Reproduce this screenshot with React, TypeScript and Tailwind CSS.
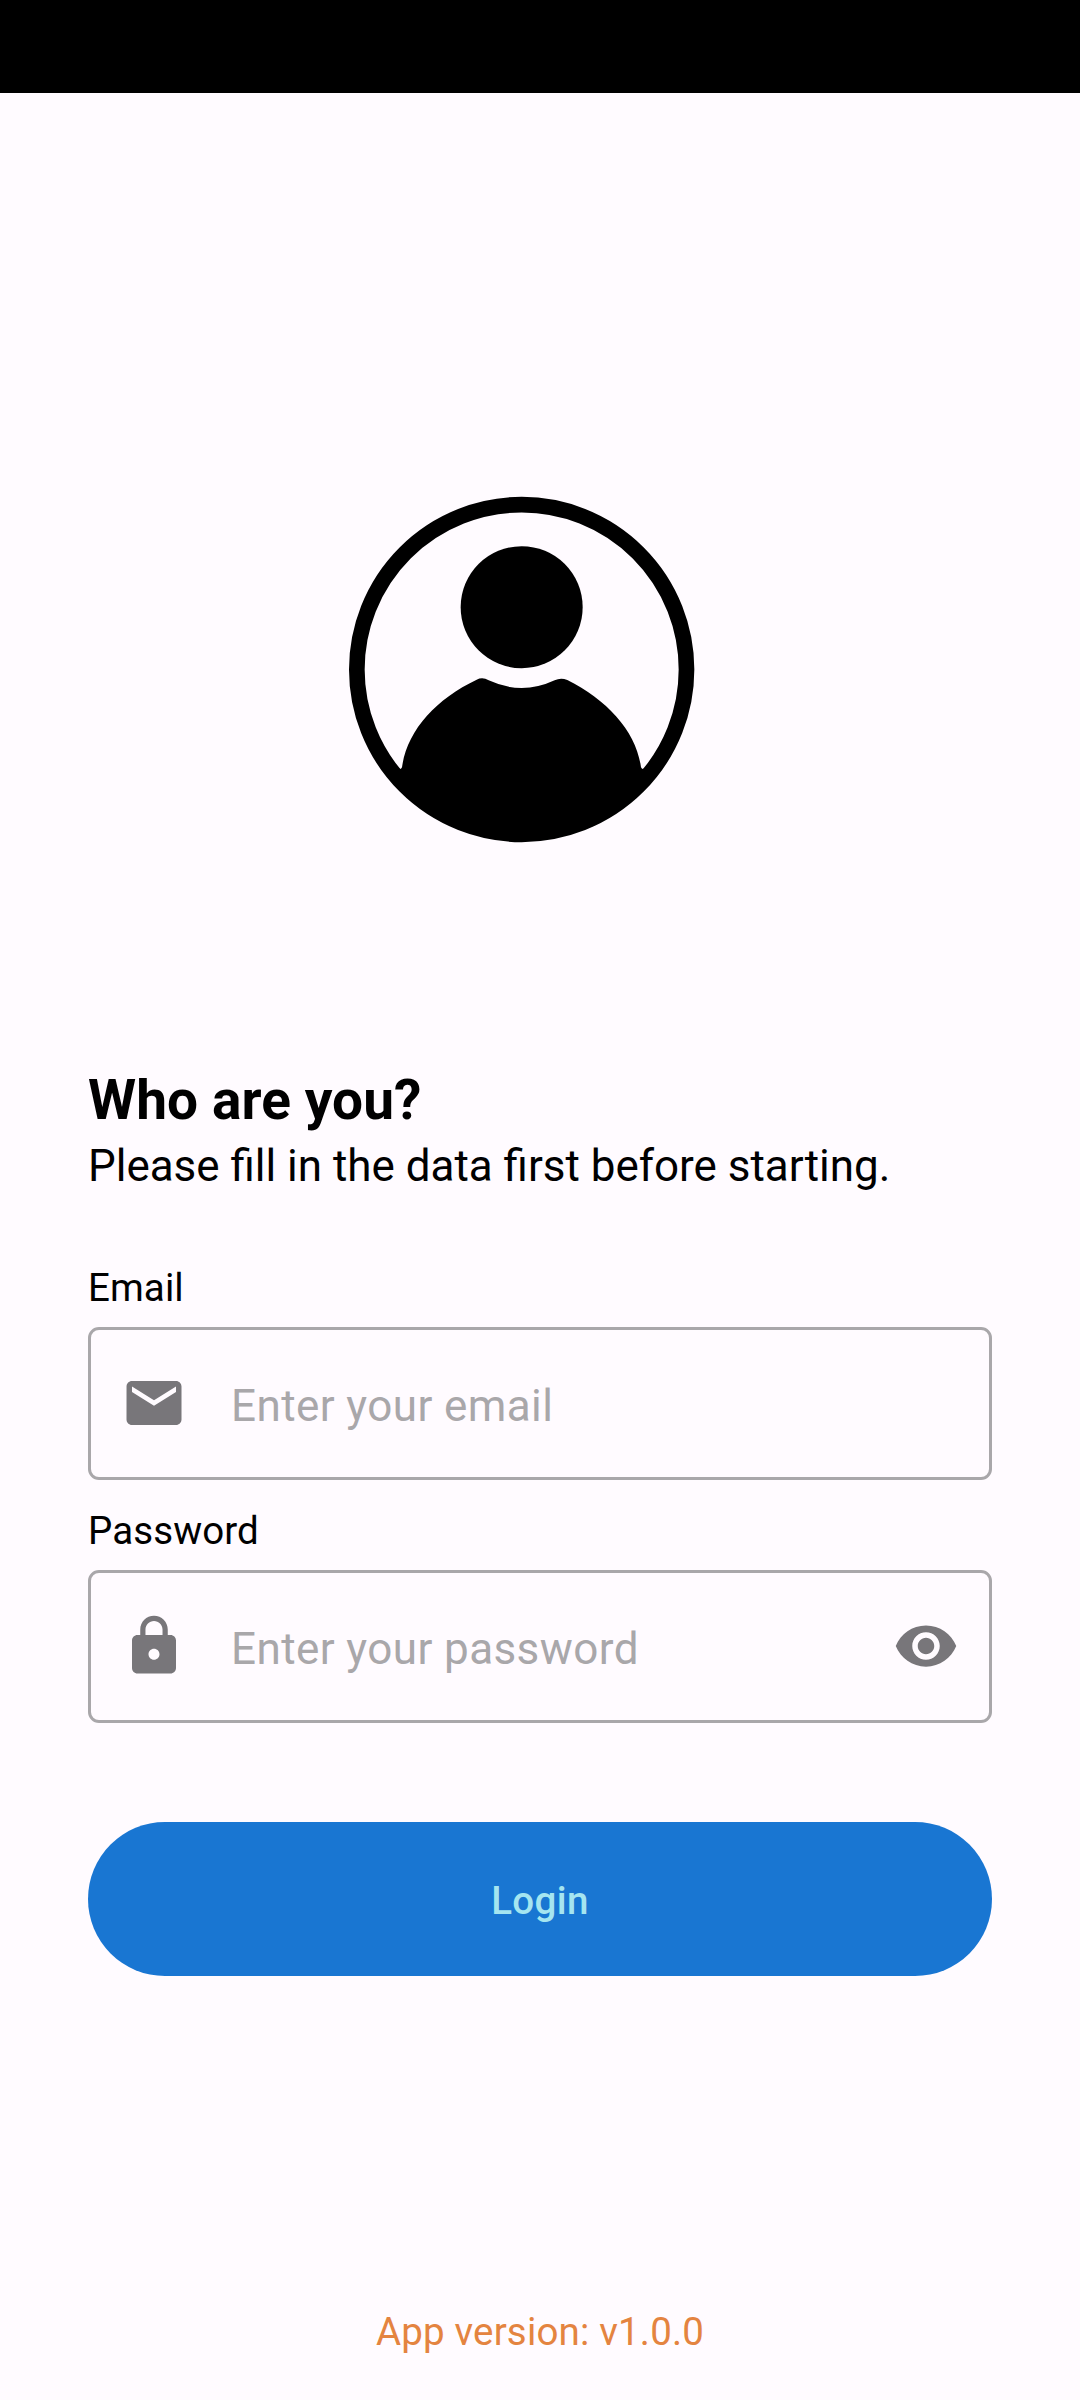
import { useState } from "react";
import type { ReactNode } from "react";

function Icon({ d }: { d: string }) {
  return (
    <svg viewBox="0 0 24 24" className="mb-[2px] block size-[66px] shrink-0 fill-[#78767a]" aria-hidden="true">
      <path d={d} />
    </svg>
  );
}

const MAIL =
  "M20 4H4c-1.1 0-1.99.9-1.99 2L2 18c0 1.1.9 2 2 2h16c1.1 0 2-.9 2-2V6c0-1.1-.9-2-2-2zm0 4l-8 5-8-5V6l8 5 8-5v2z";
const LOCK =
  "M18 8h-1V6c0-2.76-2.24-5-5-5S7 3.24 7 6v2H6c-1.1 0-2 .9-2 2v10c0 1.1.9 2 2 2h12c1.1 0 2-.9 2-2V10c0-1.1-.9-2-2-2zm-6 9c-1.1 0-2-.9-2-2s.9-2 2-2 2 .9 2 2-.9 2-2 2zm3.1-9H8.9V6c0-1.71 1.39-3.1 3.1-3.1 1.71 0 3.1 1.39 3.1 3.1v2z";
const EYE =
  "M12 4.5C7 4.5 2.73 7.61 1 12c1.73 4.39 6 7.5 11 7.5s9.27-3.11 11-7.5c-1.73-4.39-6-7.5-11-7.5zM12 17c-2.76 0-5-2.24-5-5s2.24-5 5-5 5 2.24 5 5-2.24 5-5 5zm0-8c-1.66 0-3 1.34-3 3s1.34 3 3 3 3-1.34 3-3-1.34-3-3-3z";

function Avatar() {
  return (
    <svg viewBox="0 0 1140 1140" className="ml-[330px] size-[380px]" aria-hidden="true">
      <circle cx="575" cy="568.5" r="494.5" fill="none" stroke="#000" strokeWidth="47" />
      <circle cx="575" cy="381.5" r="183" />
      <path d="M207 865Q212 870 216 862C231 752 317 657 440 599Q458 590 476 601Q575 647 674 601Q692 592 712 600C832 660 920 756 933 862Q937 870 943 865L925 925A500 500 0 0 1 225 925Z" />
    </svg>
  );
}

type FieldProps = {
  label: string;
  placeholder: string;
  icon: string;
  type: string;
  children?: ReactNode;
};

function Field({ label, placeholder, icon, type, children }: FieldProps) {
  return (
    <label className="block">
      <span className="block text-[38.5px] leading-[46px] tracking-[0.1px]">{label}</span>
      <span className="mt-4 flex h-[153px] items-center rounded-[11px] border-[3px] border-[#a9a7aa] px-[30px]">
        <Icon d={icon} />
        <input
          type={type}
          placeholder={placeholder}
          className="ml-11 h-[60px] min-w-0 flex-1 translate-y-[2px] bg-transparent text-[44px] tracking-[0.41px] outline-none placeholder:text-[#a9a7aa]"
        />
        {children}
      </span>
    </label>
  );
}

export default function App() {
  const [visible, setVisible] = useState(false);
  return (
    <div className="flex h-[2400px] w-[1080px] flex-col bg-[#fffbff] font-[Roboto,sans-serif] text-black">
      <div className="h-[93px] shrink-0 bg-black" />
      <div className="mt-[387px]">
        <Avatar />
      </div>
      <main className="mt-[208px] px-[88px]">
        <h1 className="text-[55px] leading-[64px] font-bold tracking-[0.08px]">Who are you?</h1>
        <p className="mt-2 text-[43.95px] leading-[52px]">Please fill in the data first before starting.</p>
        <form className="mt-[73px] flex flex-col" onSubmit={(e) => e.preventDefault()}>
          <div className="flex flex-col gap-7">
            <Field label="Email" placeholder="Enter your email" icon={MAIL} type="email" />
            <Field
              label="Password"
              placeholder="Enter your password"
              icon={LOCK}
              type={visible ? "text" : "password"}
            >
              <button type="button" aria-label="Toggle password visibility" onClick={() => setVisible(!visible)}>
                <Icon d={EYE} />
              </button>
            </Field>
          </div>
          <button
            type="submit"
            className="mt-[99px] h-[154px] rounded-full bg-[#1976d2] pt-[3px] text-[38.5px] font-medium tracking-[0.385px] text-[#a5e5f0]"
          >
            Login
          </button>
        </form>
      </main>
      <footer className="mt-[333px] text-center text-[38.5px] leading-[46px] tracking-[0.17px] text-[#e48440]">
        App version: v1.0.0
      </footer>
    </div>
  );
}
